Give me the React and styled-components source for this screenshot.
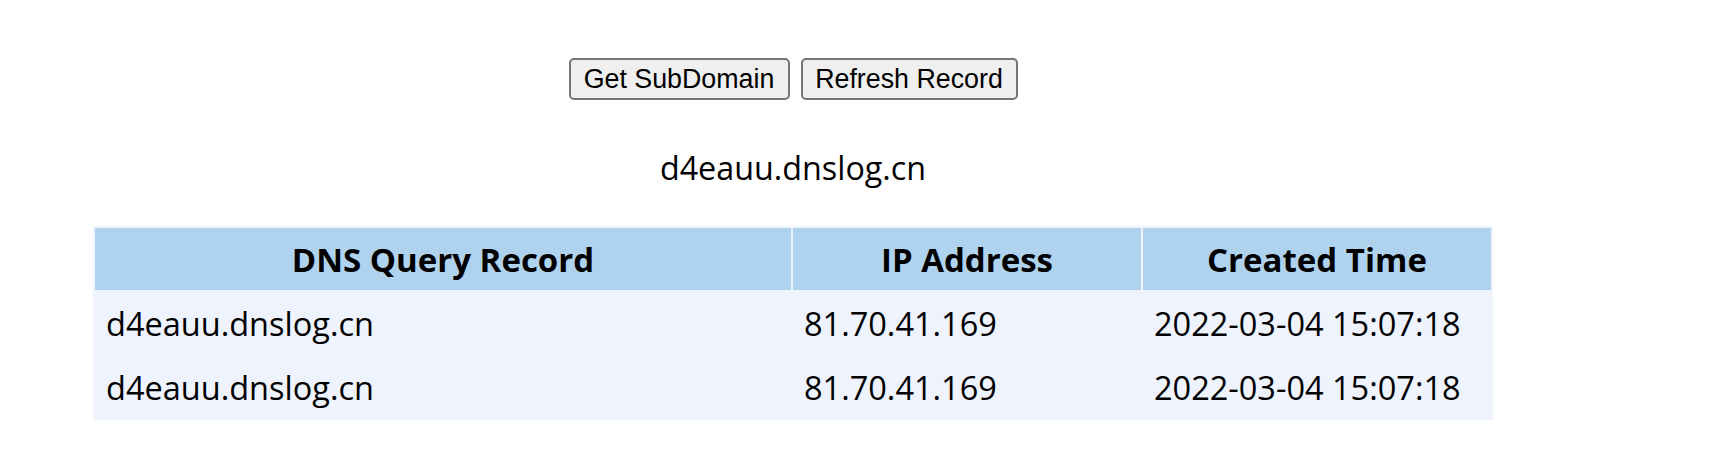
import React from "react";
import styled, { createGlobalStyle } from "styled-components";

const Global = createGlobalStyle`
  html, body { margin: 0; padding: 0; background: #ffffff; }
  body { font-family: "Open Sans", "Noto Sans", sans-serif; color: #000; }
`;

const Page = styled.div`
  width: 1586px;
  display: flex;
  flex-direction: column;
  align-items: center;
`;

const Toolbar = styled.div`
  display: flex;
  gap: 11px;
  margin-top: 58px;
`;

const Button = styled.button`
  font-family: "Liberation Sans", Arial, sans-serif;
  font-size: 26.8px;
  height: 42px;
  padding: 0;
  white-space: nowrap;
  width: ${(p) => p.$w}px;
  background: #efefef;
  color: #000;
  border: 2px solid #767676;
  border-radius: 5px;
  box-sizing: border-box;
  cursor: pointer;
`;

const Domain = styled.div`
  margin-top: 46px;
  font-size: 32.3px;
  line-height: 42px;
`;

const Table = styled.table`
  margin-top: 38px;
  width: 1400px;
  border-spacing: 2px;
  background: #eef3fd;
  font-size: 32.5px;
`;

const Th = styled.th`
  background: #afd3ee;
  height: 62px;
  padding: 0 11px;
  font-size: 33px;
  font-weight: 700;
  text-align: center;
  width: ${(p) => p.$w}px;
`;

const Td = styled.td`
  background: #eef3fd;
  height: 62px;
  padding: 0 11px;
  text-align: left;
  white-space: nowrap;
`;

const rows = [
  { host: "d4eauu.dnslog.cn", ip: "81.70.41.169", time: "2022-03-04 15:07:18" },
  { host: "d4eauu.dnslog.cn", ip: "81.70.41.169", time: "2022-03-04 15:07:18" },
];

export default function App() {
  return (
    <>
      <Global />
      <Page>
        <Toolbar>
          <Button $w={221}>Get SubDomain</Button>
          <Button $w={217}>Refresh Record</Button>
        </Toolbar>
        <Domain>d4eauu.dnslog.cn</Domain>
        <Table>
          <thead>
            <tr>
              <Th $w={674}>DNS Query Record</Th>
              <Th $w={326}>IP Address</Th>
              <Th $w={326}>Created Time</Th>
            </tr>
          </thead>
          <tbody>
            {rows.map((r, i) => (
              <tr key={i}>
                <Td>{r.host}</Td>
                <Td>{r.ip}</Td>
                <Td>{r.time}</Td>
              </tr>
            ))}
          </tbody>
        </Table>
      </Page>
    </>
  );
}
